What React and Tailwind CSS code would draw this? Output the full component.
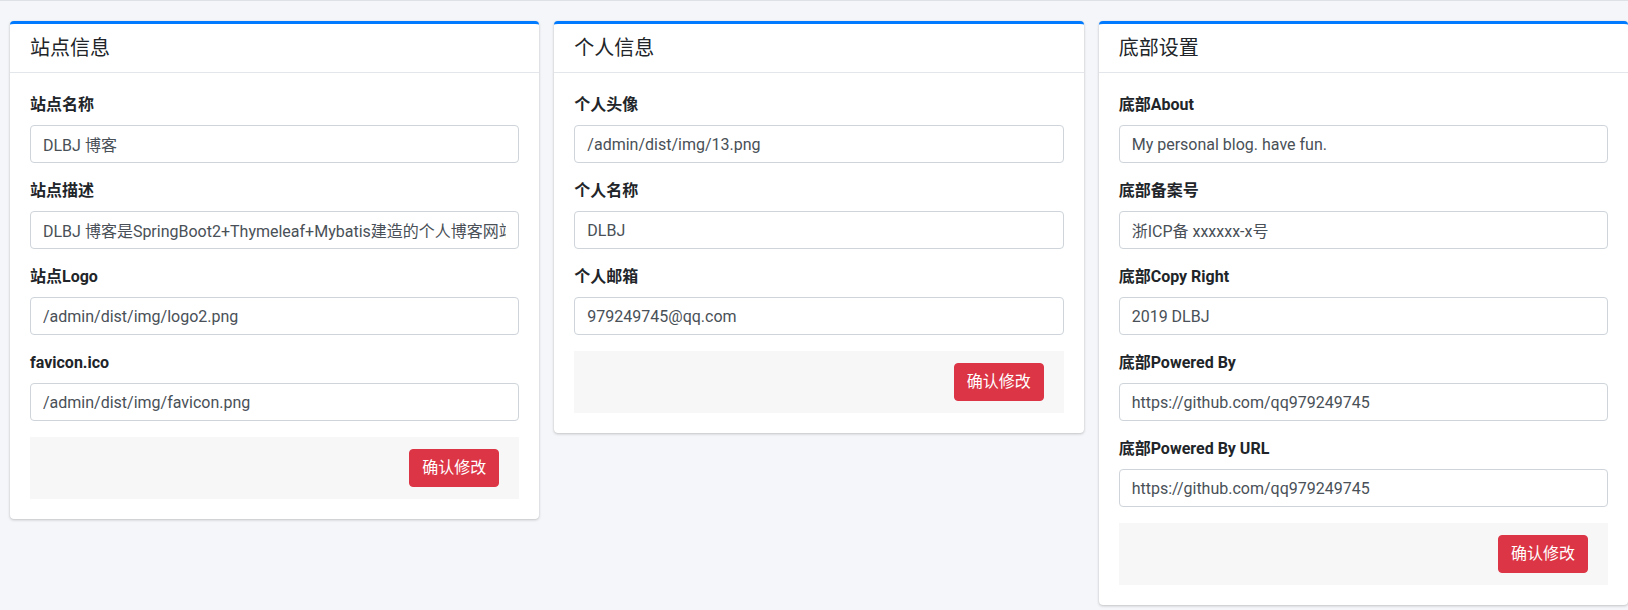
import React from 'react';

const font = { fontFamily: 'Roboto, "Noto Sans CJK SC", sans-serif' };

const sections = [
  {
    title: '站点信息',
    fields: [
      ['站点名称', 'DLBJ 博客'],
      ['站点描述', 'DLBJ 博客是SpringBoot2+Thymeleaf+Mybatis建造的个人博客网站'],
      ['站点Logo', '/admin/dist/img/logo2.png'],
      ['favicon.ico', '/admin/dist/img/favicon.png'],
    ],
  },
  {
    title: '个人信息',
    fields: [
      ['个人头像', '/admin/dist/img/13.png'],
      ['个人名称', 'DLBJ'],
      ['个人邮箱', '979249745@qq.com'],
    ],
  },
  {
    title: '底部设置',
    fields: [
      ['底部About', 'My personal blog. have fun.'],
      ['底部备案号', '浙ICP备 xxxxxx-x号'],
      ['底部Copy Right', '2019 DLBJ'],
      ['底部Powered By', 'https://github.com/qq979249745'],
      ['底部Powered By URL', 'https://github.com/qq979249745'],
    ],
  },
];

function Field({ label, value }) {
  return (
    <div className="mb-4">
      <label className="mb-2 block text-[16px] font-bold leading-6 text-[#212529]">{label}</label>
      <input
        type="text"
        defaultValue={value}
        readOnly
        style={font}
        className="block h-[38px] w-full rounded-[4px] border border-[#ced4da] bg-white px-3 text-[16px] text-[#495057] outline-none"
      />
    </div>
  );
}

function SettingsCard({ title, fields }) {
  return (
    <div className="rounded-[4px] border-t-[3px] border-[#007bff] bg-white shadow-[0_0_1px_rgba(0,0,0,0.125),0_1px_3px_rgba(0,0,0,0.2)]">
      <div className="border-b border-[#e3e6ea] px-5 py-3">
        <h3 className="text-[20px] font-normal leading-6 text-[#212529]">{title}</h3>
      </div>
      <div className="p-5">
        {fields.map(([label, value]) => (
          <Field key={label} label={label} value={value} />
        ))}
        <div className="flex justify-end bg-[#f7f7f7] px-5 py-3">
          <button className="h-[38px] rounded-[4px] border border-[#dc3545] bg-[#dc3545] px-3 text-[16px] leading-6 text-white">
            确认修改
          </button>
        </div>
      </div>
    </div>
  );
}

export default function App() {
  return (
    <div style={font} className="min-h-[610px] border-t border-[#dee2e6] bg-[#f4f6f9] pl-[10px] pt-5">
      <div className="grid grid-cols-3 items-start gap-[15px]">
        {sections.map((s) => (
          <SettingsCard key={s.title} title={s.title} fields={s.fields} />
        ))}
      </div>
    </div>
  );
}
